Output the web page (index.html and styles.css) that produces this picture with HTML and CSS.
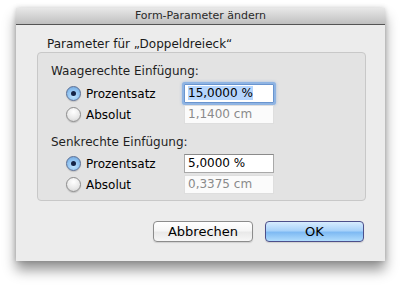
FILE: index.html
```html
<!DOCTYPE html>
<html lang="de">
<head>
<meta charset="utf-8">
<link rel="stylesheet" href="styles.css">
</head>
<body>
<div class="window">
  <div class="titlebar">Form-Parameter ändern</div>
  <div class="content">
    <div class="caption">Parameter für „Doppeldreieck“</div>
    <div class="group">
      <div class="section">Waagerechte Einfügung:</div>
      <div class="row first">
        <span class="radio on"></span><span class="rlabel">Prozentsatz</span>
        <span class="field focus"><span class="sel">15,0000 %</span></span>
      </div>
      <div class="row">
        <span class="radio"></span><span class="rlabel">Absolut</span>
        <span class="field off">1,1400 cm</span>
      </div>
      <div class="section second">Senkrechte Einfügung:</div>
      <div class="row first">
        <span class="radio on"></span><span class="rlabel">Prozentsatz</span>
        <span class="field">5,0000 %</span>
      </div>
      <div class="row">
        <span class="radio"></span><span class="rlabel">Absolut</span>
        <span class="field off">0,3375 cm</span>
      </div>
    </div>
    <div class="buttons">
      <button class="btn">Abbrechen</button>
      <button class="btn default">OK</button>
    </div>
  </div>
</div>
</body>
</html>
```
FILE: styles.css
```css
html, body {
  margin: 0;
  padding: 0;
  background: #ffffff;
}
body {
  font-family: "DejaVu Sans", "Liberation Sans", sans-serif;
  font-size: 12px;
  color: #000;
  padding: 8px 0 30px 16px;
}
.window {
  width: 369px;
  height: 253px;
  background: #ececec;
  box-shadow: 0 9px 12px rgba(0,0,0,0.42), 0 0 5px rgba(0,0,0,0.18);
  display: flex;
  flex-direction: column;
}
.titlebar {
  height: 16px;
  line-height: 16px;
  text-align: center;
  color: #2a2a2a;
  font-size: 11px;
  background: linear-gradient(#e8e8e8, #d4d4d4 50%, #bfbfbf);
  border-bottom: 1px solid #545454;
}
.content {
  padding: 11px 20px 0 21px;
  display: flex;
  flex-direction: column;
}
.caption {
  height: 16px;
  line-height: 16px;
  margin-left: 10px;
  color: #1a1a1a;
}
.group {
  height: 137px;
  border: 1px solid #c8c8c8;
  border-radius: 4px;
  background: #e3e3e3;
  padding: 10px 0 0 13px;
  box-sizing: content-box;
  width: 314px;
}
.section {
  height: 16px;
  line-height: 16px;
  color: #1f1f1f;
  margin-bottom: 5px;
}
.section.second {
  margin-top: 10px;
  margin-bottom: 4px;
}
.row {
  display: grid;
  grid-template-columns: 15px 93px 90px;
  column-gap: 5px;
  align-items: center;
  height: 19px;
  margin-left: 15px;
  margin-bottom: 2px;
}
.radio {
  width: 13px;
  height: 13px;
  border-radius: 50%;
  border: 1px solid #8c8c8c;
  background: radial-gradient(circle at 50% 30%, #ffffff, #e8e8e8 60%, #cfcfcf);
  box-shadow: 0 1px 1px rgba(0,0,0,0.15);
  position: relative;
}
.radio.on {
  border-color: #5a6f95;
  background: radial-gradient(circle at 50% 70%, #bfe3ff, #8fc2f0 55%, #6a9fd8);
}
.radio.on::after {
  content: "";
  position: absolute;
  left: 4px;
  top: 4px;
  width: 5px;
  height: 5px;
  border-radius: 50%;
  background: #152447;
}
.rlabel {
  color: #000;
  line-height: 16px;
}
.field {
  line-height: 17px;
  border: 1px solid #a9a9a9;
  border-top-color: #8a8a8a;
  background: #fff;
  padding-left: 3px;
  box-sizing: border-box;
  width: 90px;
  height: 19px;
  white-space: nowrap;
  color: #000;
}
.field.off {
  border-color: #dedede;
  color: #8a8a8a;
  background: #fbfbfb;
}
.field.focus {
  border-color: #6a95cf;
  box-shadow: 0 0 0 2px #8fb4e3, 0 0 3px 2px rgba(100,150,220,0.5);
  border-radius: 1px;
}
.sel {
  background: #b5d5fd;
}
.buttons {
  display: flex;
  justify-content: flex-end;
  gap: 12px;
  margin-top: 20px;
  padding-right: 1px;
}
.btn {
  font-family: inherit;
  font-size: 13px;
  height: 21px;
  width: 100px;
  padding: 0;
  border: 1px solid #8c8c8c;
  border-radius: 4px;
  background: linear-gradient(#ffffff, #f6f6f6 45%, #e9e9e9 55%, #f7f7f7);
  color: #000;
  box-shadow: 0 1px 1px rgba(0,0,0,0.12);
}
.btn.default {
  width: 99px;
  border-color: #4d4f8a;
  background: linear-gradient(#d7ecff, #a8d2fa 45%, #7fbaf3 55%, #b0dcfd);
}
```
